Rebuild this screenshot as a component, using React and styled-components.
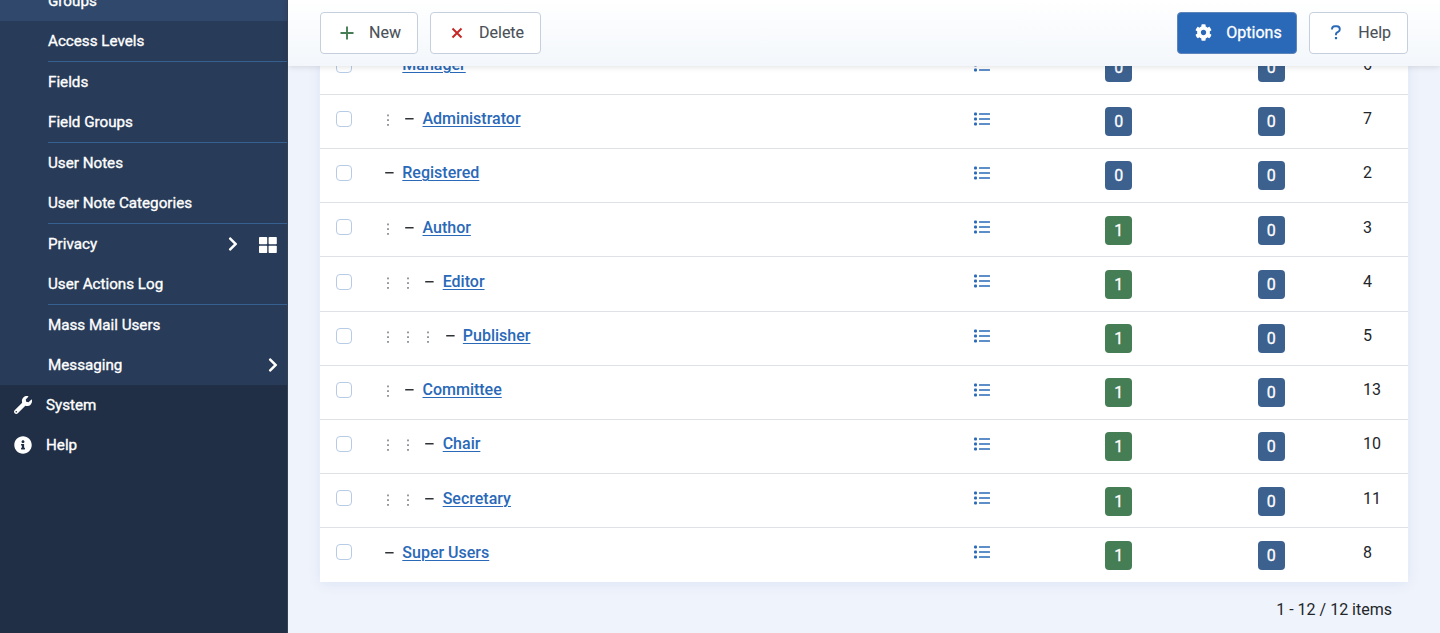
import React from 'react';
import styled, { createGlobalStyle, css } from 'styled-components';
import { FaCog, FaWrench, FaInfoCircle, FaChevronRight } from 'react-icons/fa';

const GlobalStyle = createGlobalStyle`
  *, *::before, *::after { box-sizing: border-box; }
  body {
    margin: 0;
    overflow: hidden;
    font-family: Roboto, "Liberation Sans", sans-serif;
    font-size: 16px;
    line-height: 24px;
    color: #22262a;
    background: #eff3fb;
  }
`;

const Page = styled.div`
  display: flex;
  height: 633px;
  overflow: hidden;
`;

const Sidebar = styled.nav`
  width: 288px;
  flex: none;
  background: #202f45;
  color: #fff;
  font-size: 15.2px;
  border-right: 1px solid #354357;
  overflow: hidden;
`;

const Submenu = styled.ul`
  list-style: none;
  margin: -19px 0 0;
  padding: 0;
  background: #283b58;
`;

const SubItem = styled.li`
  padding-left: 48px;
  background: ${(p) => (p.$active ? '#2f486b' : 'transparent')};
`;

const SubLink = styled.a`
  display: flex;
  align-items: center;
  height: ${(p) => (p.$divided ? 41 : 40)}px;
  padding-right: ${(p) => (p.$dashboard ? 10 : 9)}px;
  ${(p) => p.$divided && css`border-top: 1px solid #35608f;`}
  color: #fff;
  -webkit-text-stroke: 0.35px #fff;
`;

const SubLabel = styled.span`
  flex: 1;
  white-space: nowrap;
`;

const Chevron = styled(FaChevronRight)`
  display: block;
  width: 10px;
  height: 16px;
`;

const Dashboard = styled.svg`
  display: block;
  width: 18px;
  height: 16px;
  margin: 2px 0 0 21px;
`;

const MainItem = styled.a`
  display: flex;
  align-items: center;
  gap: 14px;
  height: 40px;
  padding-left: 14px;
  -webkit-text-stroke: 0.35px #fff;

  svg { width: 18px; height: 18px; }
`;

const MainLabel = styled.span`
  white-space: nowrap;
`;

const Main = styled.main`
  flex: 1;
  min-width: 0;
  display: flex;
  flex-direction: column;
`;

const Toolbar = styled.header`
  position: relative;
  z-index: 1;
  flex: none;
  display: flex;
  align-items: flex-start;
  gap: 12px;
  height: 66px;
  padding: 12.4px 32px 0;
  background: linear-gradient(#fff, #f3f7fb);
  box-shadow: 0 1px 6px rgba(0, 0, 0, 0.12);
`;

const Spacer = styled.div`
  flex: 1;
`;

const ToolButton = styled.button`
  display: flex;
  align-items: center;
  gap: ${(p) => p.$gap}px;
  width: ${(p) => p.$width}px;
  height: 41.2px;
  padding: 0 0 0 ${(p) => p.$inset}px;
  border: 1px solid ${(p) => (p.$primary ? '#5e85bb' : '#c6cfdd')};
  border-radius: 4px;
  background: ${(p) => (p.$primary ? '#2a69b8' : '#fff')};
  color: ${(p) => (p.$primary ? '#fff' : '#495057')};
  font: inherit;
  -webkit-text-stroke: ${(p) => (p.$primary ? '0.3px' : '0.1px')};

  svg { flex: none; color: ${(p) => p.$tone}; }
`;

const ToolLabel = styled.span`
  padding-top: 1px;
`;

const Table = styled.div`
  flex: none;
  margin: -25.4px 32px 0;
  background: #fff;
  box-shadow: 0 2px 12px rgba(42, 90, 184, 0.09);
`;

const Row = styled.div`
  display: grid;
  grid-template-columns: 66px 558px 76px 85.2px 152.6px 105.2px 45px;
  height: 54.2px;
  padding-top: 12.5px;
  border-bottom: 1px solid #dee2e6;

  &:last-child { height: 53.6px; border-bottom: 0; }
`;

const Checkbox = styled.span`
  width: 16px;
  height: 16px;
  margin: 3.7px 0 0 16px;
  border: 1px solid #b8cbe5;
  border-radius: 4px;
  background: #fff;
`;

const Title = styled.div`
  display: flex;
  height: 24px;
  white-space: pre;
`;

const Guide = styled.svg`
  flex: none;
  width: 4px;
  height: 24px;
  margin-right: 16.2px;
  color: #8b8f94;
`;

const Dash = styled.svg`
  flex: none;
  width: 9px;
  height: 24px;
  margin: 0 8.3px 0 -1px;
  color: #2f3236;
`;

const GroupLink = styled.a`
  color: #2a69b8;
  font-weight: 500;
  text-decoration: underline;
  text-decoration-thickness: 1px;
  text-underline-offset: 2px;
`;

const ListIcon = styled.svg`
  width: 16px;
  height: 14px;
  margin: 4.5px 0 0 30px;
  color: #2a69b8;
`;

const Badge = styled.span`
  width: 27px;
  height: 29px;
  border-radius: 4px;
  background: ${(p) => (p.$green ? '#457d54' : '#3d618f')};
  color: #fff;
  line-height: 29px;
  text-align: center;
  -webkit-text-stroke: 0.3px #fff;
`;

const Count = styled.div`
  text-align: right;
  padding: 13.4px 48px 0 0;
  line-height: 30px;
`;

const menu = [
  { label: 'Groups', active: true },
  { label: 'Access Levels' },
  { label: 'Fields', divided: true },
  { label: 'Field Groups' },
  { label: 'User Notes', divided: true },
  { label: 'User Note Categories' },
  { label: 'Privacy', divided: true, chevron: true, dashboard: true },
  { label: 'User Actions Log' },
  { label: 'Mass Mail Users', divided: true },
  { label: 'Messaging', chevron: true },
];

const groups = [
  { name: 'Manager', depth: 0, enabled: 0, id: 6 },
  { name: 'Administrator', depth: 1, enabled: 0, id: 7 },
  { name: 'Registered', depth: 0, enabled: 0, id: 2 },
  { name: 'Author', depth: 1, enabled: 1, id: 3 },
  { name: 'Editor', depth: 2, enabled: 1, id: 4 },
  { name: 'Publisher', depth: 3, enabled: 1, id: 5 },
  { name: 'Committee', depth: 1, enabled: 1, id: 13 },
  { name: 'Chair', depth: 2, enabled: 1, id: 10 },
  { name: 'Secretary', depth: 2, enabled: 1, id: 11 },
  { name: 'Super Users', depth: 0, enabled: 1, id: 8 },
];

function GroupRow({ group }) {
  return (
    <Row>
      <Checkbox role="checkbox" aria-checked="false" />
      <Title>
        {Array.from({ length: group.depth }, (_, i) => (
          <Guide key={i} viewBox="0 0 4 24" fill="currentColor">
            <rect x="1.1" y="7.5" width="1.8" height="1.8" />
            <rect x="1.1" y="12.2" width="1.8" height="1.8" />
            <rect x="1.1" y="17" width="1.8" height="1.8" />
          </Guide>
        ))}
        <Dash viewBox="0 0 9 24" fill="currentColor">
          <rect x="0.2" y="11" width="8.4" height="1.5" />
        </Dash>
        <GroupLink>{group.name}</GroupLink>
      </Title>
      <ListIcon viewBox="0 0 16 14" fill="currentColor">
        {[0.5, 5.5, 10.5].map((y) => (
          <g key={y}>
            <rect x="0" y={y} width="3" height="3" rx="1" />
            <rect x="5" y={y + 0.7} width="11" height="1.6" rx="0.4" />
          </g>
        ))}
      </ListIcon>
      <Spacer />
      <Badge $green={group.enabled > 0}>{group.enabled}</Badge>
      <Badge>0</Badge>
      <span>{group.id}</span>
    </Row>
  );
}

export default function App() {
  return (
    <Page>
      <GlobalStyle />
      <Sidebar>
        <Submenu>
          {menu.map((item) => (
            <SubItem key={item.label} $active={item.active}>
              <SubLink $divided={item.divided} $dashboard={item.dashboard}>
                <SubLabel>{item.label}</SubLabel>
                {item.chevron && <Chevron />}
                {item.dashboard && (
                  <Dashboard viewBox="0 0 18 16" fill="currentColor">
                    <rect x="0" y="0" width="8.2" height="7.3" rx="0.8" />
                    <rect x="9.6" y="0" width="8.2" height="7.3" rx="0.8" />
                    <rect x="0" y="8.7" width="8.2" height="7.3" rx="0.8" />
                    <rect x="9.6" y="8.7" width="8.2" height="7.3" rx="0.8" />
                  </Dashboard>
                )}
              </SubLink>
            </SubItem>
          ))}
        </Submenu>
        <MainItem><FaWrench /><MainLabel>System</MainLabel></MainItem>
        <MainItem><FaInfoCircle /><MainLabel>Help</MainLabel></MainItem>
      </Sidebar>
      <Main>
        <Toolbar>
          <ToolButton $width={98} $inset={19} $gap={15} $tone="#457d54">
            <svg width="14" height="14" viewBox="0 0 14 14" stroke="currentColor" strokeWidth="1.9">
              <path d="M7 .5v13M.5 7h13" />
            </svg>
            <ToolLabel>New</ToolLabel>
          </ToolButton>
          <ToolButton $width={111} $inset={20} $gap={16} $tone="#c52827">
            <svg width="12" height="12" viewBox="0 0 12 12" stroke="currentColor" strokeWidth="2">
              <path d="M1.5 1.5l9 9M10.5 1.5l-9 9" />
            </svg>
            <ToolLabel>Delete</ToolLabel>
          </ToolButton>
          <Spacer />
          <ToolButton $primary $width={120} $inset={17} $gap={14} $tone="#fff">
            <FaCog size={17} />
            <ToolLabel>Options</ToolLabel>
          </ToolButton>
          <ToolButton $width={98.7} $inset={20} $gap={16} $tone="#2a69b8">
            <svg width="12" height="15" viewBox="0 0 12 15" fill="none" stroke="currentColor" strokeWidth="1.9">
              <path d="M2 4.6V3.9Q2 1.3 4.8 1.3H6.8Q9.8 1.3 9.8 4.2 9.8 5.8 8.3 6.7L6.9 7.6Q6 8.2 6 9.1V10.2" />
              <path d="M6 12v2.2" strokeWidth="2.2" />
            </svg>
            <ToolLabel>Help</ToolLabel>
          </ToolButton>
        </Toolbar>
        <Table>
          {groups.map((group) => <GroupRow key={group.id} group={group} />)}
        </Table>
        <Count>1 - 12 / 12 items</Count>
      </Main>
    </Page>
  );
}
